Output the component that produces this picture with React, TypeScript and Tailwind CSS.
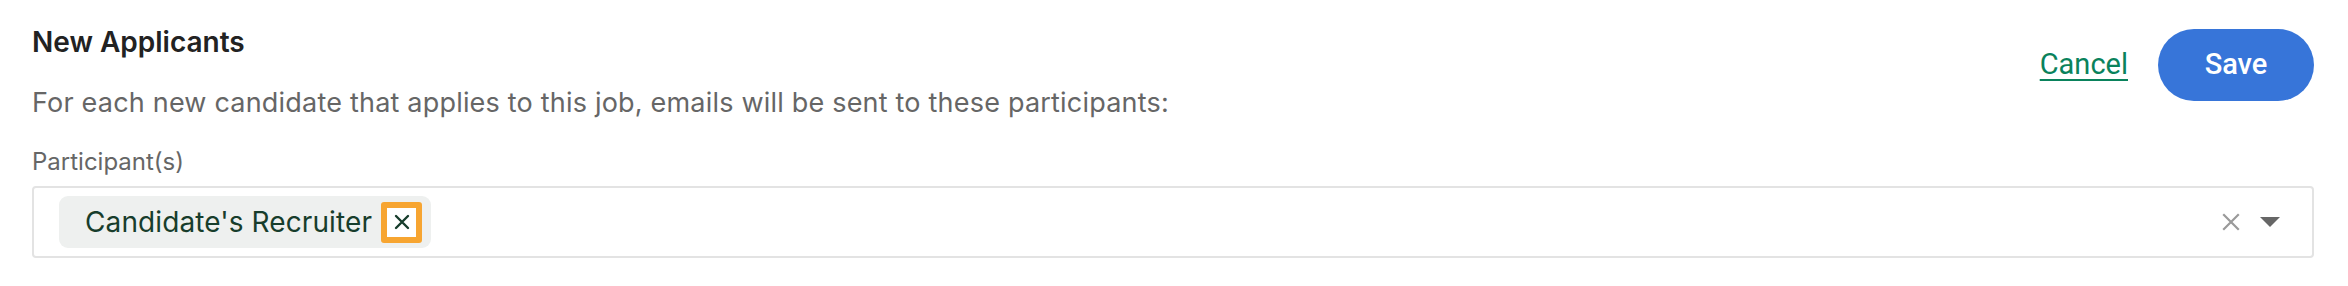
const ClearIcon = () => (
  <svg width="18" height="18" viewBox="0 0 18 18" className="block">
    <path d="M2 2 L16 16 M16 2 L2 16" stroke="#9a9a9a" strokeWidth="2.2" strokeLinecap="square" />
  </svg>
);

const Caret = () => (
  <svg width="20" height="10" viewBox="0 0 20 10" className="block">
    <path d="M0 0 H20 L10 10 Z" fill="#666666" />
  </svg>
);

const ChipClose = () => (
  <svg width="16" height="16" viewBox="0 0 16 16" className="block">
    <path d="M2 2 L14 14 M14 2 L2 14" stroke="#173d2c" strokeWidth="2.4" strokeLinecap="round" />
  </svg>
);

const App = () => {
  return (
    <div className="w-[2348px] h-[286px] bg-white pl-[32px] pr-[34px] pt-[25px] font-['Inter',sans-serif]">
      <div className="flex justify-between items-start">
        <div className="flex flex-col">
          <h2 className="text-[28px] leading-[34px] font-semibold text-[#222222]">New Applicants</h2>
          <p className="mt-[28px] text-[27px] leading-[32px] tracking-[0.2px] text-[#666666]">
            For each new candidate that applies to this job, emails will be sent to these participants:
          </p>
        </div>
        <div className="flex items-center gap-[30px] mt-[4px] font-['Roboto',sans-serif]">
          <a href="#" className="text-[29px] text-[#0a825c] underline underline-offset-[5px] decoration-[2px]">
            Cancel
          </a>
          <button className="h-[72px] w-[156px] rounded-full bg-[#3775d9] text-white text-[29px] font-medium">
            Save
          </button>
        </div>
      </div>

      <label className="block mt-[29px] text-[24px] leading-[28px] text-[#666666]">Participant(s)</label>
      <div className="mt-[10px] h-[72px] border-2 border-[#e3e3e3] rounded-[4px] flex items-center pl-[25px] pr-[32px]">
        <div className="h-[52px] rounded-[9px] bg-[#eef0ef] flex items-center pl-[26px] pr-[9px] gap-[9px]">
          <span className="text-[28px] tracking-[0.1px] text-[#173d2c]">Candidate's Recruiter</span>
          <span className="w-[41px] h-[41px] border-[6px] border-[#f7a531] rounded-[3px] bg-white flex items-center justify-center">
            <ChipClose />
          </span>
        </div>
        <div className="ml-auto flex items-center gap-[20px]">
          <ClearIcon />
          <Caret />
        </div>
      </div>
    </div>
  );
};

export default App;
